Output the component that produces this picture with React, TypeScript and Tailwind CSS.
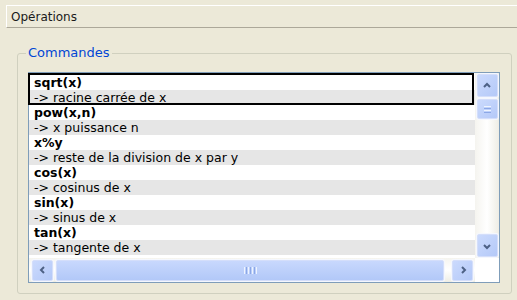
import React from "react";

const items = [
  ["sqrt(x)", "-> racine carrée de x"],
  ["pow(x,n)", "-> x puissance n"],
  ["x%y", "-> reste de la division de x par y"],
  ["cos(x)", "-> cosinus de x"],
  ["sin(x)", "-> sinus de x"],
  ["tan(x)", "-> tangente de x"],
];

function Chevron({ dir }: { dir: "up" | "down" | "left" | "right" }) {
  const paths: Record<string, string> = {
    up: "M2 6 L5 3 L8 6",
    down: "M2 4 L5 7 L8 4",
    left: "M6 2 L3 5 L6 8",
    right: "M4 2 L7 5 L4 8",
  };
  return (
    <svg width="10" height="10" viewBox="0 0 10 10">
      <path d={paths[dir]} fill="none" stroke="#4D6185" strokeWidth="2" />
    </svg>
  );
}

function Btn({ dir, className }: { dir: "up" | "down" | "left" | "right"; className: string }) {
  return (
    <div
      className={`flex items-center justify-center rounded-[2px] border border-[#D4DEFA] bg-gradient-to-br from-[#CBDAFD] to-[#B4C9F8] shadow-[0_0_0_1px_#F4F7FE] ${className}`}
    >
      <Chevron dir={dir} />
    </div>
  );
}

export default function App() {
  return (
    <div
      className="w-[517px] h-[300px] bg-[#ECE9D8] overflow-hidden pt-[5px]"
      style={{ fontFamily: '"DejaVu Sans", sans-serif' }}
    >
      <div className="ml-[6px] h-[23px] border-t border-l border-white border-b border-b-[#ACA899] flex items-center pl-[4px] pt-[1px] text-[12px] text-[#1a1a1a]">
        Opérations
      </div>
      <div className="relative ml-[17px] mt-[25px] w-[495px] h-[241px] border border-[#D0D0BF] rounded-[3px] pt-[18px] pl-[10px]">
        <span className="absolute left-[8px] top-[-10px] px-[2px] bg-[#ECE9D8] text-[13px] leading-[18px] text-[#0046D5]">
          Commandes
        </span>
        <div className="w-[472px] h-[211px] border border-[#7F9DB9] bg-white flex flex-col">
          <div className="flex h-[185px]">
            <div className="relative w-[446px] pt-[2px] text-[12.5px] text-black">
              {items.map(([t, d]) => (
                <div key={t}>
                  <div className="h-[15px] leading-[15px] pl-[5px] font-bold">{t}</div>
                  <div className="h-[15px] leading-[15px] pl-[5px] bg-[#E6E6E6]">{d}</div>
                </div>
              ))}
              <div className="absolute top-0 left-[-1px] w-[446px] h-[32px] border-2 border-black" />
            </div>
            <div className="w-[24px] flex flex-col items-center bg-gradient-to-r from-[#F5F4EF] via-white to-[#EEEDE5] pt-[1px]">
              <Btn dir="up" className="w-[21px] h-[23px]" />
              <div className="mt-[2px] w-[21px] h-[20px] flex flex-col items-center justify-center gap-[1px] rounded-[2px] border border-[#D4DEFA] bg-gradient-to-br from-[#CBDAFD] to-[#B4C9F8] shadow-[0_0_0_1px_#F4F7FE]">
                <div className="w-[7px] h-[1px] bg-[#EEF4FE]" />
                <div className="w-[7px] h-[1px] bg-[#8CA8E6]" />
                <div className="w-[7px] h-[1px] bg-[#EEF4FE]" />
                <div className="w-[7px] h-[1px] bg-[#8CA8E6]" />
              </div>
              <div className="flex-1" />
              <Btn dir="down" className="w-[21px] h-[23px] mb-[1px]" />
            </div>
          </div>
          <div className="flex h-[24px] bg-gradient-to-b from-[#F5F4EF] via-white to-[#EEEDE5]">
            <div className="w-[446px] flex items-center pl-[3px] pr-[2px] gap-[2px]">
              <Btn dir="left" className="w-[21px] h-[21px]" />
              <div className="flex-1 h-[21px] ml-[1px] mr-[6px] flex items-center justify-center gap-[1px] rounded-[2px] border border-[#D4DEFA] bg-gradient-to-b from-[#C8D8FD] to-[#B2C8F8] shadow-[0_0_0_1px_#F4F7FE]">
                <div className="w-[1px] h-[7px] bg-[#EEF4FE]" />
                <div className="w-[1px] h-[7px] bg-[#8CA8E6]" />
                <div className="w-[1px] h-[7px] bg-[#EEF4FE]" />
                <div className="w-[1px] h-[7px] bg-[#8CA8E6]" />
                <div className="w-[1px] h-[7px] bg-[#EEF4FE]" />
                <div className="w-[1px] h-[7px] bg-[#8CA8E6]" />
                <div className="w-[1px] h-[7px] bg-[#EEF4FE]" />
              </div>
              <Btn dir="right" className="w-[21px] h-[21px]" />
            </div>
            <div className="flex-1 bg-white" />
          </div>
        </div>
      </div>
    </div>
  );
}
